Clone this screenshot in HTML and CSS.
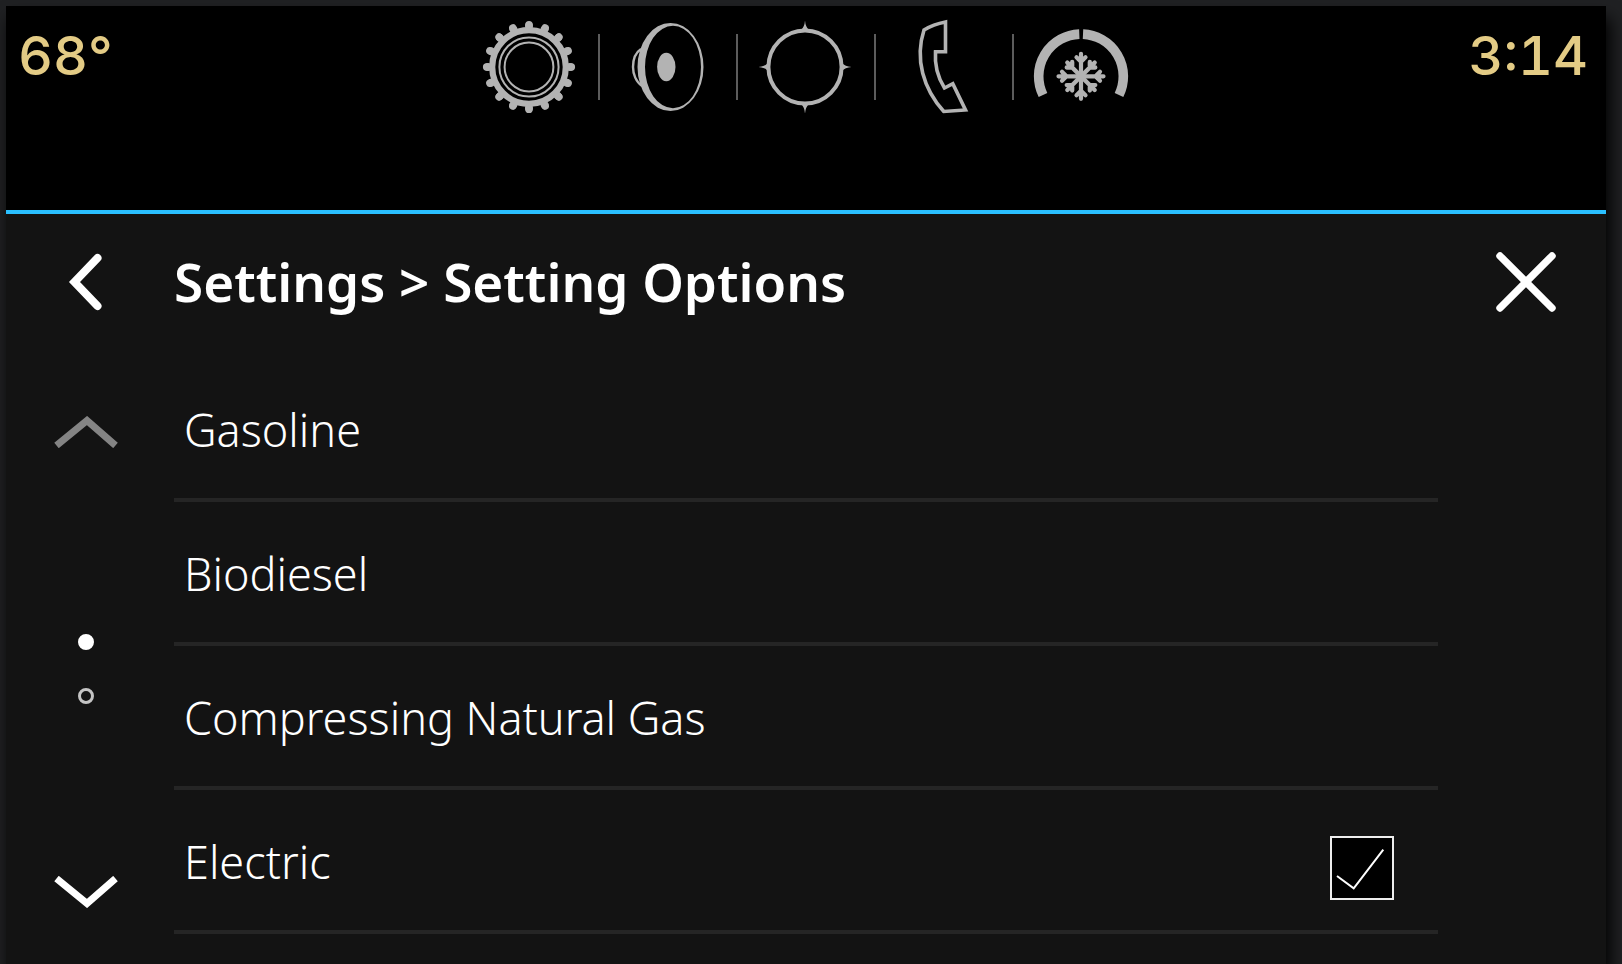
FILE: index.html
```html
<!DOCTYPE html>
<html lang="en">
<head>
<meta charset="utf-8">
<meta name="viewport" content="width=device-width, initial-scale=1">
<title>Settings</title>
<link rel="stylesheet" href="styles.css">
</head>
<body>
<div class="screen">
  <header class="topbar">
    <span class="status">68°</span>
    <nav class="apps" aria-label="Apps">
      <button class="app" type="button" aria-label="Settings">
        <svg viewBox="0 0 136 96" class="glyph">
          <circle cx="67" cy="48" r="36.800" stroke-width="6.200"/>
          <circle cx="67" cy="48" r="41" stroke-width="8" stroke-linecap="round" pathLength="160" stroke-dasharray="0.01 9.99"/>
          <circle cx="67" cy="48" r="42.400" stroke-width="7.400" stroke-linecap="round" pathLength="160" stroke-dasharray="0.01 9.99"/>
          <circle cx="67" cy="48" r="29.6" stroke-width="2"/>
          <circle cx="67" cy="48" r="24.4" stroke-width="2"/>
        </svg>
      </button>
      <span class="divider"></span>
      <button class="app" type="button" aria-label="Audio">
        <svg viewBox="0 0 136 96" class="glyph">
          <path class="solid" fill-rule="evenodd" d="M37.5 48a33 44 0 1 0 66 0a33 44 0 1 0-66 0zM45 48a28 41.200 0 1 0 56 0a28 41.200 0 1 0-56 0z"/>
          <ellipse class="solid" cx="66.3" cy="48" rx="9.2" ry="14.3"/>
          <path stroke-width="2.4" d="M41 30C35 34 33 41 33 48S36 63 42 67"/>
        </svg>
      </button>
      <span class="divider"></span>
      <button class="app" type="button" aria-label="Navigation">
        <svg viewBox="0 0 136 96" class="glyph">
          <circle cx="67" cy="48" r="36.6" stroke-width="4"/>
          <path class="solid" d="M63 11Q66.500 8 67 1.500Q67.500 8 71 11zM63 85Q66.500 88 67 94.500Q67.500 88 71 85zM30 44Q27 47.500 20.500 48Q27 48.500 30 52zM104 44Q107 47.500 113.500 48Q107 48.500 104 52z"/>
        </svg>
      </button>
      <span class="divider"></span>
      <button class="app" type="button" aria-label="Phone">
        <svg viewBox="0 0 136 96" class="glyph">
          <path stroke-width="3.6" d="M69.500 3V32.700H59.500C58.500 46 61.500 58 68.500 69L76.800 64.700L89.500 91L67.800 92.500C47.500 70 38.500 40 48 11C54.500 7 61.500 4.500 69.500 3Z"/>
        </svg>
      </button>
      <span class="divider"></span>
      <button class="app" type="button" aria-label="Climate">
        <svg viewBox="0 0 136 96" class="glyph">
          <path stroke-width="9.600" d="M29 76A42.300 42.300 0 0 1 65.300 15.100M69 15.100A42.300 42.300 0 0 1 105 76"/>
          <g transform="translate(67 57.300)" stroke-width="4.200" stroke-linecap="round">
            <path d="M0-22.500V22.500M-22.500 0H22.500M-4.500-19L0-14.500L4.500-19M-4.500 19L0 14.500L4.500 19M-19-4.500L-14.500 0L-19 4.500M19-4.500L14.500 0L19 4.500"/>
            <path transform="rotate(45) scale(.86)" stroke-width="5" d="M0-22.500V22.500M-22.500 0H22.500M-4.500-19L0-14.500L4.500-19M-4.500 19L0 14.500L4.500 19M-19-4.500L-14.500 0L-19 4.500M19-4.500L14.500 0L19 4.500"/>
          </g>
        </svg>
      </button>
    </nav>
    <time class="status status-end">3:14</time>
  </header>

  <main class="page">
    <header class="page-head">
      <button class="icon-button" type="button" aria-label="Back">
        <svg viewBox="0 0 64 64" class="icon"><path d="M43.500 8L20.500 32L43.500 56" stroke-width="8" stroke-linecap="round"/></svg>
      </button>
      <h1 class="title">Settings &gt; Setting Options</h1>
      <button class="icon-button close" type="button" aria-label="Close">
        <svg viewBox="0 0 64 64" class="icon"><path d="M6 6L58 58M58 6L6 58" stroke-width="7.400" stroke-linecap="round"/></svg>
      </button>
    </header>

    <div class="body">
      <div class="pager">
        <button class="page-button" type="button" aria-label="Previous page" disabled>
          <svg viewBox="0 0 64 32" class="chevron"><path d="M2.500 29.500L33 4.500L61.500 29.500" stroke-width="7"/></svg>
        </button>
        <div class="dots">
          <span class="dot dot-current"></span>
          <span class="dot"></span>
        </div>
        <button class="page-button" type="button" aria-label="Next page">
          <svg viewBox="0 0 64 32" class="chevron"><path d="M2.500 2.500L33 27.500L61.500 2.500" stroke-width="7"/></svg>
        </button>
      </div>
      <ul class="options">
        <li class="option"><button class="option-name" type="button">Gasoline</button></li>
        <li class="option"><button class="option-name" type="button">Biodiesel</button></li>
        <li class="option"><button class="option-name" type="button">Compressing Natural Gas</button></li>
        <li class="option">
          <label class="option-name" for="electric">Electric</label>
          <span class="check">
            <input class="check-input" type="checkbox" id="electric" checked>
            <svg viewBox="0 0 64 64" class="check-mark"><path d="M7 40L23.700 52.300L53.300 13.700" stroke-width="2"/></svg>
          </span>
        </li>
      </ul>
    </div>
  </main>
</div>
</body>
</html>
```
FILE: styles.css
```css
* { box-sizing: border-box; }

body {
  margin: 0;
  min-height: 100vh;
  display: flex;
  padding: 6px 16px 0 6px;
  background: #202123;
  color: #fff;
  font-family: "Noto Sans", "Open Sans", sans-serif;
  overflow: hidden;
}

button {
  margin: 0;
  padding: 0;
  border: 0;
  background: none;
  color: inherit;
  font: inherit;
}

svg {
  display: block;
  fill: none;
}

.screen {
  flex: 1;
  display: flex;
  flex-direction: column;
  background: #131313;
  box-shadow: 4px 12px 16px #000;
}

.topbar {
  display: grid;
  grid-template-columns: 1fr auto 1fr;
  align-items: start;
  height: 208px;
  background: #000;
  border-bottom: 4px solid #2abfff;
}

.status {
  padding: 17px 12px;
  color: #e3cb85;
  font-family: Inter, "Liberation Sans", sans-serif;
  font-size: 54px;
  font-weight: 500;
  font-variant-numeric: tabular-nums;
  line-height: 66px;
}

.status-end {
  padding-right: 18px;
  text-align: right;
}

.apps {
  display: flex;
  align-items: center;
  padding-top: 13px;
}

.app {
  width: 136px;
}

.glyph {
  width: 136px;
  height: 96px;
  stroke: #b3b3b3;
}

.solid {
  fill: #b3b3b3;
  stroke: none;
}

.divider {
  width: 2px;
  height: 66px;
  background: #5c5c5c;
}

.page {
  flex: 1;
}

.page-head,
.body {
  display: grid;
  grid-template-columns: 168px 1fr 168px;
}

.page-head {
  align-items: center;
  height: 136px;
  margin-bottom: 8px;
}

.icon-button {
  justify-self: center;
  margin-right: 8px;
}

.close {
  justify-self: end;
  margin-right: 48px;
}

.icon {
  width: 64px;
  height: 64px;
  stroke: #fff;
}

.title {
  margin: 0;
  font-size: 53px;
  font-weight: 600;
  line-height: 64px;
}

.pager {
  display: flex;
  flex-direction: column;
  align-items: center;
  justify-content: space-between;
  padding: 58px 8px 26px 0;
}

.chevron {
  width: 64px;
  height: 32px;
  stroke: #fff;
}

.page-button:disabled .chevron {
  stroke: #848484;
}

.dots {
  display: flex;
  flex-direction: column;
  gap: 38px;
  padding-top: 14px;
}

.dot {
  width: 16px;
  height: 16px;
  border: 3px solid #c4c4c4;
  border-radius: 50%;
}

.dot-current {
  border-color: #fff;
  background: #fff;
}

.options {
  margin: 0;
  padding: 0;
  list-style: none;
}

.option {
  display: flex;
  align-items: center;
  height: 144px;
  padding: 4px 44px 0 10px;
  border-bottom: 4px solid #252525;
}

.option-name {
  flex: 1;
  font-size: 45px;
  font-weight: 300;
  line-height: 64px;
  text-align: left;
}

.check {
  display: grid;
  margin-top: 12px;
}

.check-input,
.check-mark {
  grid-area: 1 / 1;
  width: 64px;
  height: 64px;
}

.check-input {
  appearance: none;
  margin: 0;
  border: 2px solid #eee;
  background: #000;
}

.check-mark {
  stroke: #fff;
  pointer-events: none;
  visibility: hidden;
}

.check-input:checked + .check-mark {
  visibility: visible;
}
```
